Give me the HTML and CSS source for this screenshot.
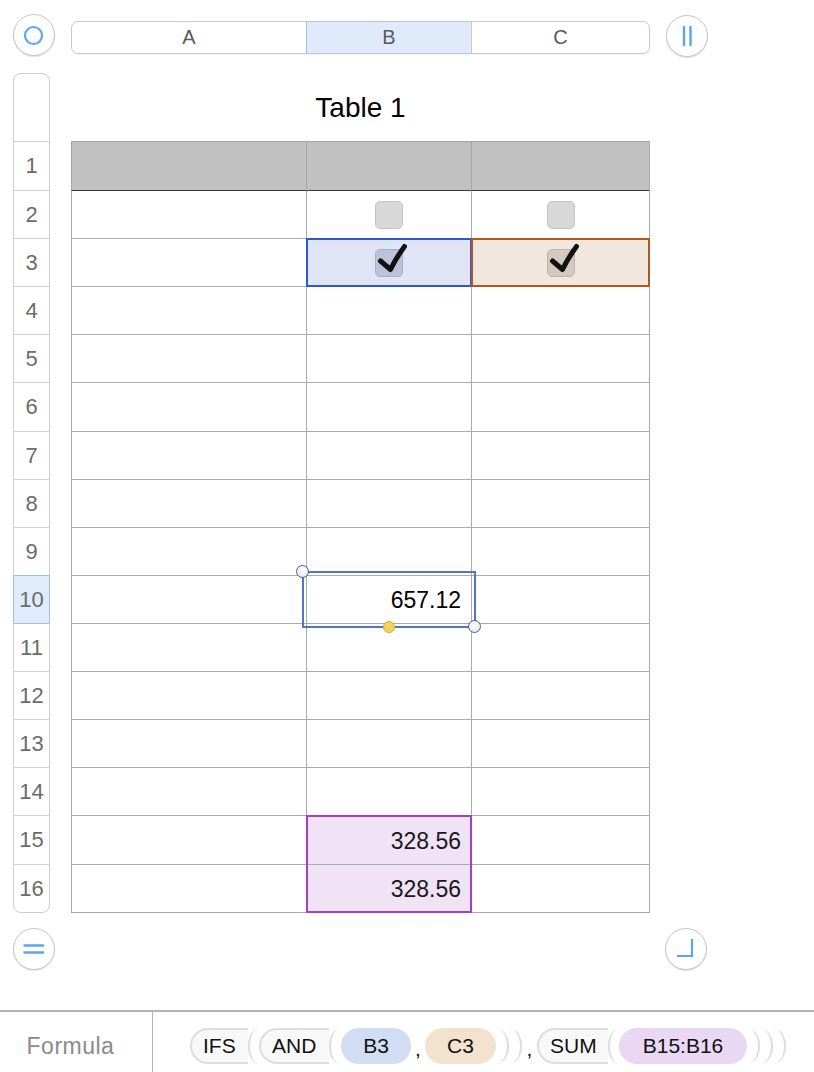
FILE: index.html
```html
<!DOCTYPE html>
<html>
<head>
<meta charset="utf-8">
<title>Table 1</title>
<link rel="stylesheet" href="styles.css">
</head>
<body>
<div class="sheet">
  <button class="circ tl" aria-label="Select table">
    <svg width="42" height="42" viewBox="0 0 42 42"><circle cx="20.5" cy="21.5" r="8.5" fill="none" stroke="#5fa3f3" stroke-width="2.2"/></svg>
  </button>
  <div class="colhdr">
    <div class="ch">A</div>
    <div class="ch sel">B</div>
    <div class="ch">C</div>
  </div>
  <button class="circ tr" aria-label="Columns">
    <svg width="42" height="42" viewBox="0 0 42 42"><path d="M18 11 V31 M24.5 11 V31" stroke="#5fa3f3" stroke-width="2.4" fill="none"/></svg>
  </button>

  <div class="rowhdr">
    <div class="rh blank"></div>
    <div class="rh">1</div>
    <div class="rh">2</div>
    <div class="rh">3</div>
    <div class="rh">4</div>
    <div class="rh">5</div>
    <div class="rh">6</div>
    <div class="rh">7</div>
    <div class="rh">8</div>
    <div class="rh">9</div>
    <div class="rh cur">10</div>
    <div class="rh after">11</div>
    <div class="rh">12</div>
    <div class="rh">13</div>
    <div class="rh">14</div>
    <div class="rh">15</div>
    <div class="rh">16</div>
  </div>

  <div class="tablewrap">
    <div class="title">Table 1</div>
    <div class="table">
      <div class="c h"></div><div class="c h"></div><div class="c h"></div>
      <div class="c t"></div><div class="c t"><span class="cb"></span></div><div class="c t"><span class="cb"></span></div>
      <div class="c"></div>
      <div class="c bl"><span class="cb on-b"><svg class="ck" width="36" height="40" viewBox="0 0 36 40"><path d="M5.5 22 L15.5 30.5 Q21 19 29.5 7.5"/></svg></span></div>
      <div class="c or"><span class="cb on-c"><svg class="ck" width="36" height="40" viewBox="0 0 36 40"><path d="M5.5 22 L15.5 30.5 Q21 19 29.5 7.5"/></svg></span></div>
      <div class="c"></div><div class="c"></div><div class="c"></div>
      <div class="c"></div><div class="c"></div><div class="c"></div>
      <div class="c"></div><div class="c"></div><div class="c"></div>
      <div class="c"></div><div class="c"></div><div class="c"></div>
      <div class="c"></div><div class="c"></div><div class="c"></div>
      <div class="c"></div><div class="c"></div><div class="c"></div>
      <div class="c"></div><div class="c num">657.12</div><div class="c"></div>
      <div class="c"></div><div class="c"></div><div class="c"></div>
      <div class="c"></div><div class="c"></div><div class="c"></div>
      <div class="c"></div><div class="c"></div><div class="c"></div>
      <div class="c"></div><div class="c"></div><div class="c"></div>
      <div class="c"></div><div class="c num pu">328.56</div><div class="c"></div>
      <div class="c"></div><div class="c num pu">328.56</div><div class="c"></div>

      <div class="ov ov-b3"></div>
      <div class="ov ov-c3"></div>
      <div class="ov ov-pu"></div>
      <div class="ov ov-sel"></div>
      <span class="hd hd-tl"></span>
      <span class="hd hd-br"></span>
      <span class="hd-y"></span>
    </div>
  </div>

  <button class="circ bl-btn" aria-label="Rows">
    <svg width="42" height="42" viewBox="0 0 42 42"><path d="M10.5 17.5 H31 M10.5 24.5 H31" stroke="#5fa3f3" stroke-width="2.4" fill="none"/></svg>
  </button>
  <button class="circ br-btn" aria-label="Resize">
    <svg width="42" height="42" viewBox="0 0 42 42"><path d="M12 28 H27 V11" stroke="#5fa3f3" stroke-width="2.2" fill="none"/></svg>
  </button>
</div>

<div class="formula">
  <div class="flabel">Formula</div>
  <div class="tokens">
    <span class="fn ifs">IFS</span><span class="op"></span>
    <span class="fn andf">AND</span><span class="op"></span>
    <span class="ref r-b3">B3</span>
    <span class="comma">,</span>
    <span class="ref r-c3">C3</span>
    <span class="cp"></span><span class="cp"></span>
    <span class="comma">,</span>
    <span class="fn sum">SUM</span><span class="op"></span>
    <span class="ref r-b15">B15:B16</span>
    <span class="cp"></span><span class="cp"></span><span class="cp"></span>
  </div>
</div>
</body>
</html>
```

FILE: styles.css
```css
* { box-sizing: border-box; }

html, body {
  margin: 0;
  padding: 0;
}

body {
  width: 814px;
  height: 1072px;
  overflow: hidden;
  background: #ffffff;
  display: flex;
  flex-direction: column;
  font-family: "Liberation Sans", Arial, Helvetica, sans-serif;
  color: #111;
}

.sheet {
  flex: 1;
  display: grid;
  grid-template-columns: 42px 579px 42px;
  grid-template-rows: 42px auto 57px;
  column-gap: 16px;
  padding: 14px 0 0 13px;
  align-items: start;
  align-content: start;
}

/* round buttons */
.circ {
  width: 42px;
  height: 42px;
  padding: 0;
  margin: 0;
  border: 1px solid #c6c6c6;
  border-radius: 50%;
  background: #fff;
  box-shadow: 0 1px 1px rgba(0, 0, 0, 0.12);
  display: block;
}
.circ svg { display: block; margin: -1px; }

.tl { grid-column: 1; grid-row: 1; }
.tr { grid-column: 3; grid-row: 1; margin-top: 1px; }
.bl-btn { grid-column: 1; grid-row: 3; margin-top: 15px; }
.br-btn { grid-column: 3; grid-row: 3; margin-top: 15px; margin-left: -1px; }

/* column header */
.colhdr {
  grid-column: 2;
  grid-row: 1;
  margin-top: 7px;
  height: 33px;
  display: grid;
  grid-template-columns: 234px 165px 178px;
  border: 1px solid #c8c8c8;
  border-radius: 7px;
  box-shadow: 0 1px 0 rgba(0, 0, 0, 0.04);
}
.ch {
  display: flex;
  align-items: center;
  justify-content: center;
  font-size: 20px;
  color: #5a5a5a;
}
.ch + .ch { border-left: 1px solid #c8c8c8; }
.ch.sel {
  background: #dfeafb;
  border-left-color: #a9bdda;
  box-shadow: 1px 0 0 #a9bdda, 0 -1px 0 #b5c7e0, 0 1px 0 #b5c7e0;
}

/* row header strip */
.rowhdr {
  grid-column: 1;
  grid-row: 2;
  margin-top: 17px;
  width: 37px;
  display: grid;
  grid-template-rows: 67px 49px 48px 48px 48px 48px 49px 48px 48px 48px 48px 48px 48px 48px 48px 49px 48px;
  border: 1px solid #cdcdcd;
  border-radius: 8px;
}
.rh {
  display: flex;
  align-items: center;
  justify-content: center;
  font-size: 22px;
  color: #6c6c6c;
  border-top: 1px solid #d2d2d2;
}
.rh.blank { border-top: none; }
.rh.cur {
  background: #e0ebfb;
  border-top-color: #a9bdda;
  box-shadow: -1px 0 0 #a9bdda, 1px 0 0 #a9bdda;
}
.rh.after { border-top-color: #a9bdda; }

/* table */
.tablewrap {
  grid-column: 2;
  grid-row: 2;
  margin-top: 17px;
}
.title {
  height: 68px;
  line-height: 70px;
  text-align: center;
  font-size: 28px;
  color: #000;
}
.table {
  position: relative;
  display: grid;
  grid-template-columns: 235px 165px 178px;
  grid-template-rows: 49px 48px 48px 48px 48px 49px 48px 48px 48px 48px 48px 48px 48px 48px 49px 48px;
  border-right: 1px solid #a9a9a9;
  border-bottom: 1px solid #a9a9a9;
}
.c {
  border-left: 1px solid #ababab;
  border-top: 1px solid #ababab;
  display: flex;
  align-items: center;
  justify-content: center;
}
.c.h { background: #c0c1c0; border-top-color: #a3a3a3; border-left-color: #a6a6a6; }
.c.t { border-top-color: #3a3a3a; }
.c.bl { background: #dfe5f7; }
.c.or { background: #f2e7df; }
.c.num {
  justify-content: flex-end;
  padding-right: 10px;
  padding-top: 2px;
  font-size: 23px;
  color: #000;
}
.c.pu { background: #f0e3f6; color: #1d1521; }

.cb {
  position: relative;
  width: 28px;
  height: 28px;
  border: 1px solid #c5c5c5;
  border-radius: 5px;
  background: #d8d8d8;
}
.cb.on-b { background: #bcc2d7; border-color: #a8afc6; }
.cb.on-c { background: #d4c8bf; border-color: #c0b3a8; }
.ck {
  position: absolute;
  left: -1px;
  top: -11px;
  overflow: visible;
}
.ck path {
  fill: none;
  stroke: #121212;
  stroke-width: 5;
  stroke-linecap: round;
  stroke-linejoin: round;
}

/* overlays on the table */
.ov { position: absolute; pointer-events: none; }
.ov-b3 { left: 235px; top: 97px; width: 166px; height: 49px; border: 2px solid #2d55d4; }
.ov-c3 { left: 400px; top: 97px; width: 179px; height: 49px; border: 2px solid #b0591d; }
.ov-pu { left: 235px; top: 674px; width: 166px; height: 98px; border: 2px solid #a33fca; }
.ov-sel { left: 231px; top: 430px; width: 174px; height: 57px; border: 2px solid #4f78c4; }

.hd {
  position: absolute;
  width: 13px;
  height: 13px;
  border-radius: 50%;
  border: 1.5px solid #4a5b92;
  background: radial-gradient(circle at 50% 35%, #ffffff 0%, #eef0f4 60%, #d9dde6 100%);
}
.hd-tl { left: 225px; top: 424px; }
.hd-br { left: 397px; top: 479px; }
.hd-y {
  position: absolute;
  left: 312px;
  top: 480px;
  width: 12px;
  height: 12px;
  border-radius: 50%;
  background: #f6d257;
  border: 1px solid #d3ac3c;
}

/* formula bar */
.formula {
  height: 62px;
  border-top: 2px solid #b3b3b3;
  display: flex;
  flex: none;
}
.flabel {
  width: 153px;
  border-right: 1px solid #b3b3b3;
  display: flex;
  align-items: center;
  justify-content: center;
  font-size: 23px;
  letter-spacing: 0.5px;
  color: #8b8b8b;
  padding: 8px 11px 0 0;
}
.tokens {
  display: flex;
  align-items: center;
  padding: 8px 0 0 37px;
  font-size: 21px;
  color: #111;
}
.fn, .ref, .op, .cp, .comma {
  height: 36px;
  display: flex;
  align-items: center;
}
.fn {
  border: 2px solid #dedede;
  border-right: none;
  border-radius: 18px 0 0 18px;
  background: #f8f8f8;
  padding: 0 9px 0 11px;
}
.fn.ifs { width: 58px; }
.fn.andf { width: 70px; }
.fn.sum { width: 71px; }
.op {
  width: 11px;
  border-left: 2px solid #dcdcdc;
  border-radius: 11px 0 0 11px / 18px 0 0 18px;
}
.cp {
  width: 13px;
  border-right: 2px solid #dcdcdc;
  border-radius: 0 13px 13px 0 / 0 18px 18px 0;
}
.ref {
  justify-content: center;
  border-radius: 18px;
}
.r-b3 { width: 70px; background: #d1ddf3; margin-left: 1px; }
.r-c3 { width: 71px; background: #f3e2cd; }
.r-b15 { width: 128px; background: #e9d7f3; }
.comma { width: 14px; justify-content: center; padding-top: 6px; }
.cp + .comma { width: 15px; }
```
